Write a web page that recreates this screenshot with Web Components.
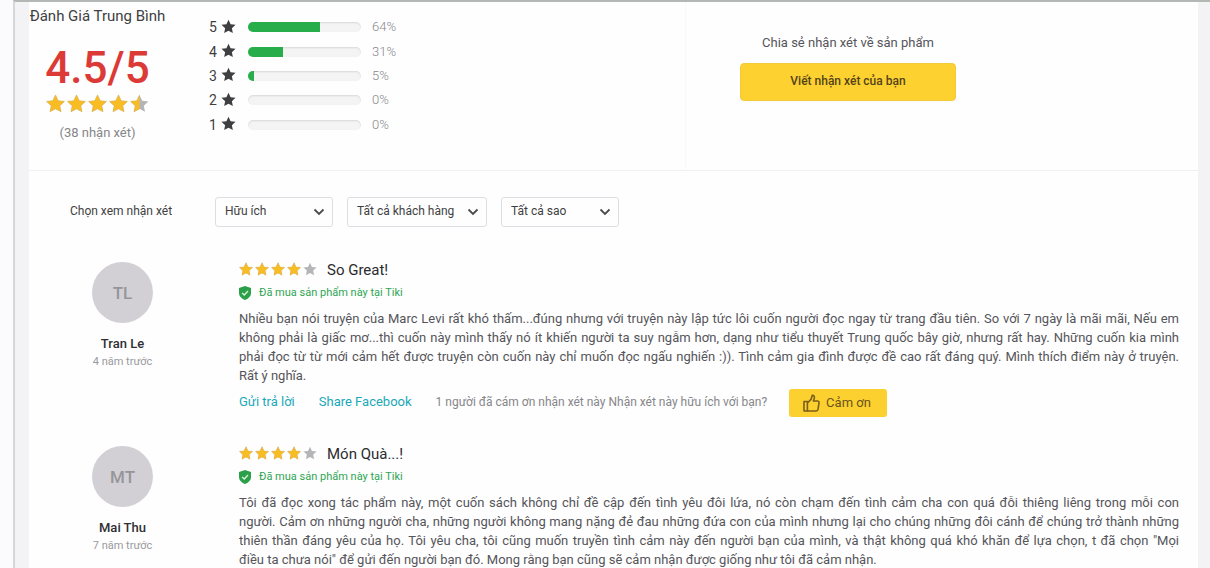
<!DOCTYPE html>
<html lang="vi">
<head>
<meta charset="utf-8">
<meta name="viewport" content="width=device-width, initial-scale=1">
<title>Đánh Giá Trung Bình</title>
<style>
  body {
    margin: 0;
    min-height: 100vh;
    background: #f3f3f5;
    color: #3f3f42;
    font-family: Roboto, "Noto Sans", sans-serif;
    font-size: 13px;
  }
</style>
</head>
<body>
<review-page>
  <rating-summary slot="summary"></rating-summary>
  <review-filters slot="filters"></review-filters>
  <review-item initials="TL" author="Tran Le" date="4 năm trước" rating="4" heading="So Great!">
    Nhiều bạn nói truyện của Marc Levi rất khó thấm...đúng nhưng với truyện này lập tức lôi cuốn người đọc ngay từ trang đầu tiên. So với 7 ngày là mãi mãi, Nếu em không phải là giấc mơ...thì cuốn này mình thấy nó ít khiến người ta suy ngẫm hơn, dạng như tiểu thuyết Trung quốc bây giờ, nhưng rất hay. Những cuốn kia mình phải đọc từ từ mới cảm hết được truyện còn cuốn này chỉ muốn đọc ngấu nghiến :)). Tình cảm gia đình được đề cao rất đáng quý. Mình thích điểm này ở truyện. Rất&nbsp;ý nghĩa.
    <review-actions slot="actions">1 người đã cám ơn nhận xét này Nhận xét này hữu ích với bạn?</review-actions>
  </review-item>
  <review-item initials="MT" author="Mai Thu" date="7 năm trước" rating="4" heading="Món Quà...!">
    Tôi đã đọc xong tác phẩm này, một cuốn sách không chỉ đề cập đến tình yêu đôi lứa, nó còn chạm đến tình cảm cha con quá đỗi thiêng liêng trong mỗi con người.&nbsp;Cảm ơn những người cha, những người không mang nặng đẻ đau những đứa con của mình nhưng lại cho chúng những đôi cánh để chúng trở thành những thiên&nbsp;thần đáng yêu của họ. Tôi yêu cha, tôi cũng muốn truyền tình cảm này đến người bạn của mình, và thật không quá khó khăn để lựa chọn, t đã chọn "Mọi điều&nbsp;ta&nbsp;chưa nói" để gửi đến người bạn đó. Mong rằng bạn cũng sẽ cảm nhận được giống như tôi đã cảm nhận.
  </review-item>
</review-page>

<script>
const STAR = 'M10 1 L12.8 7 L19.4 7.8 L14.5 12.3 L15.8 18.8 L10 15.6 L4.2 18.8 L5.5 12.3 L0.6 7.8 L7.2 7 Z';

class ReviewPage extends HTMLElement {
  connectedCallback() {
    this.attachShadow({ mode: 'open' });
    this.shadowRoot.innerHTML = `
      <style>
        :host {
          display: grid;
          grid-template-columns: 13px 16px minmax(0, 1fr) 12px;
          height: 100vh;
          overflow: hidden;
          background: #f3f3f5;
        }
        .edge { background: #fbfafc; }
        .gutter { border-left: 2px solid #d6d6d8; }
        .gutter, main { border-top: 2px solid #b4b8b4; }
        .gutter.right { border-left: 0; }
        main { background: #fefefe; }
        .reviews {
          display: grid;
          gap: 29px;
          padding: 35px 19px 0 34px;
        }
      </style>
      <div class="edge"></div>
      <div class="gutter"></div>
      <main>
        <slot name="summary"></slot>
        <slot name="filters"></slot>
        <div class="reviews"><slot></slot></div>
      </main>
      <div class="gutter right"></div>
    `;
  }
}

class StarRating extends HTMLElement {
  connectedCallback() {
    const value = Number(this.getAttribute('value'));
    const stars = [1, 2, 3, 4, 5].map((n) => {
      const part = Math.max(0, Math.min(1, value - n + 1));
      return `
        <svg viewBox="0 0 20 20" aria-hidden="true">
          <defs><clipPath id="c${n}"><rect width="${part * 20}" height="20"/></clipPath></defs>
          <path d="${STAR}" fill="#b5b5b9"/>
          <path d="${STAR}" fill="#f9bd23" stroke="#d9b24a" stroke-width="0.6" clip-path="url(#c${n})"/>
        </svg>`;
    }).join('');

    this.attachShadow({ mode: 'open' });
    this.shadowRoot.innerHTML = `
      <style>
        :host { display: inline-flex; gap: var(--star-gap, 2px); }
        svg { display: block; width: var(--star-size, 14px); height: var(--star-size, 14px); }
      </style>
      ${stars}
    `;
    this.setAttribute('role', 'img');
    this.setAttribute('aria-label', `${value}/5`);
  }
}

class RatingBar extends HTMLElement {
  connectedCallback() {
    const stars = this.getAttribute('stars');
    const percent = this.getAttribute('percent');
    this.attachShadow({ mode: 'open' });
    this.shadowRoot.innerHTML = `
      <style>
        :host {
          display: grid;
          grid-template-columns: 12px 15px 125px auto;
          align-items: center;
          justify-content: start;
        }
        label { font-size: 14px; line-height: 20px; }
        svg { width: 15px; height: 15px; margin-bottom: 2px; fill: #3f3f42; }
        progress {
          appearance: none;
          display: block;
          box-sizing: border-box;
          width: 113px;
          height: 10px;
          margin-left: 12px;
          border: 0;
          border-radius: 5px;
          overflow: hidden;
          background: #f3f3f3;
        }
        progress::-webkit-progress-bar {
          background: #f4f4f4;
          border-radius: 5px;
          box-shadow: inset 0 1px 2px rgba(0, 0, 0, 0.12);
        }
        progress::-webkit-progress-value { background: #27ae4b; }
        span { margin-left: 11px; font-weight: 300; line-height: 20px; color: #88888c; }
      </style>
      <label for="bar">${stars}</label>
      <svg viewBox="0 0 20 20" aria-hidden="true"><path d="${STAR}"/></svg>
      <progress id="bar" max="100" value="${percent}"></progress>
      <span>${percent}%</span>
    `;
  }
}

class RatingSummary extends HTMLElement {
  connectedCallback() {
    this.attachShadow({ mode: 'open' });
    this.shadowRoot.innerHTML = `
      <style>
        :host {
          box-sizing: border-box;
          display: grid;
          grid-template-columns: 180px 476px 1fr;
          height: 169px;
          border-bottom: 1px solid #f0f0f2;
        }
        h2 { margin: 4px 0 0; font-size: 15px; font-weight: 400; line-height: 20px; white-space: nowrap; }
        .average { width: 137px; text-align: center; }
        .score { margin-top: 17px; font-size: 44px; font-weight: 500; line-height: 50px; color: #dc3a37; }
        star-rating { --star-size: 19px; --star-gap: 2px; display: flex; justify-content: center; margin-top: 1px; }
        .count { margin-top: 10px; line-height: 20px; color: #86868a; }
        .bars { display: grid; grid-auto-rows: 1fr; height: 122px; margin-top: 13px; }
        .share { padding: 31px 0 0 54px; border-left: 1px solid #f8f8fa; }
        .box { width: 216px; text-align: center; }
        .box p { margin: 0; line-height: 20px; color: #55555a; }
        button {
          width: 100%;
          height: 38px;
          margin-top: 10px;
          padding: 0 0 3px;
          border: 1px solid #f2cb3a;
          border-radius: 4px;
          background: #fdd12f;
          color: #54431a;
          font: 500 12px Roboto, "Noto Sans", sans-serif;
          cursor: pointer;
        }
      </style>
      <section class="average">
        <h2>Đánh Giá Trung Bình</h2>
        <div class="score">4.5/5</div>
        <star-rating value="4.5"></star-rating>
        <div class="count">(38 nhận xét)</div>
      </section>
      <section class="bars">
        <rating-bar stars="5" percent="64"></rating-bar>
        <rating-bar stars="4" percent="31"></rating-bar>
        <rating-bar stars="3" percent="5"></rating-bar>
        <rating-bar stars="2" percent="0"></rating-bar>
        <rating-bar stars="1" percent="0"></rating-bar>
      </section>
      <section class="share">
        <div class="box">
          <p>Chia sẻ nhận xét về sản phẩm</p>
          <button type="button">Viết nhận xét của bạn</button>
        </div>
      </section>
    `;
  }
}

class FilterSelect extends HTMLElement {
  connectedCallback() {
    this.attachShadow({ mode: 'open' });
    this.shadowRoot.innerHTML = `
      <style>
        :host { display: grid; align-items: center; }
        select, svg { grid-area: 1 / 1; }
        select {
          appearance: none;
          box-sizing: border-box;
          width: 100%;
          height: 30px;
          padding: 0 28px 2px 9px;
          border: 1px solid #dfdce4;
          border-radius: 3px;
          background: #fefefe;
          color: #3f3f42;
          font: 400 12px Roboto, "Noto Sans", sans-serif;
        }
        svg { justify-self: end; width: 12px; height: 12px; margin-right: 8px; pointer-events: none; }
      </style>
      <select aria-label="${this.getAttribute('label')}">
        <option>${this.getAttribute('value')}</option>
      </select>
      <svg viewBox="0 0 12 12" fill="none" stroke="#4a4a4d" stroke-width="1.8" aria-hidden="true"><path d="M1.5 3.5 L6 8 L10.5 3.5"/></svg>
    `;
  }
}

class ReviewFilters extends HTMLElement {
  connectedCallback() {
    this.attachShadow({ mode: 'open' });
    this.shadowRoot.innerHTML = `
      <style>
        :host { display: flex; align-items: center; gap: 14px; padding: 26px 0 0 41px; }
        span { width: 131px; padding-bottom: 2px; font-size: 12px; }
        filter-select { width: 118px; }
        .wide { width: 140px; }
      </style>
      <span>Chọn xem nhận xét</span>
      <filter-select label="Sắp xếp" value="Hữu ích"></filter-select>
      <filter-select class="wide" label="Khách hàng" value="Tất cả khách hàng"></filter-select>
      <filter-select label="Số sao" value="Tất cả sao"></filter-select>
    `;
  }
}

class ReviewActions extends HTMLElement {
  connectedCallback() {
    this.attachShadow({ mode: 'open' });
    this.shadowRoot.innerHTML = `
      <style>
        :host { display: flex; align-items: center; margin-top: 4px; font-size: 12px; color: #86868a; }
        a, span { padding-bottom: 3px; line-height: 16px; }
        a { margin-right: 24px; font-size: 13px; color: #1ba8b8; text-decoration: none; }
        button {
          display: flex;
          align-items: center;
          gap: 6px;
          height: 28px;
          margin-left: 22px;
          padding: 0 16px 2px 14px;
          border: 0;
          border-radius: 3px;
          background: #fbd02f;
          color: #6b541a;
          font: 400 13px Roboto, "Noto Sans", sans-serif;
          cursor: pointer;
        }
        svg { width: 17px; height: 18px; margin-top: 2px; }
      </style>
      <a href="#reply">Gửi trả lời</a>
      <a href="#share">Share Facebook</a>
      <span><slot></slot></span>
      <button type="button">
        <svg viewBox="0 0 17 18" fill="none" stroke="#7a5f1a" stroke-width="1.6" stroke-linejoin="round" aria-hidden="true">
          <path d="M1 7.5 H4.4 V17 H1 Z"/>
          <path d="M4.4 9 L8 5.4 L9.2 1.4 C11 1.2 11.8 2.6 11.3 4.2 L10.4 7 H14.4 Q16.2 7 16 8.8 L15 15.4 Q14.6 17 13 17 H4.4"/>
        </svg>
        Cảm ơn
      </button>
    `;
  }
}

class ReviewItem extends HTMLElement {
  connectedCallback() {
    const attr = (name) => this.getAttribute(name);
    this.attachShadow({ mode: 'open' });
    this.shadowRoot.innerHTML = `
      <style>
        :host { display: grid; grid-template-columns: 119px 1fr; column-gap: 57px; }
        .author { text-align: center; }
        .avatar {
          display: grid;
          place-items: center;
          width: 61px;
          height: 61px;
          margin: 0 auto;
          border-radius: 50%;
          background: #d2d0d4;
          color: #969599;
          font-size: 17px;
          font-weight: 500;
        }
        .name { margin-top: 11px; font-weight: 500; line-height: 20px; color: #2f2f33; }
        .date { font-size: 11px; line-height: 16px; color: #9a9a9e; }
        .title { display: flex; align-items: center; gap: 10px; }
        star-rating { padding-bottom: 2px; }
        h3 { margin: 0; font-size: 15px; font-weight: 400; line-height: 16px; color: #2b2b2e; }
        .bought { display: flex; align-items: center; gap: 8px; margin-top: 7px; font-size: 11px; line-height: 16px; color: #2ea552; }
        .bought svg { width: 12px; height: 14px; }
        .text { margin: 8px 0 0; line-height: 19px; text-align: justify; color: #55555a; }
      </style>
      <div class="author">
        <div class="avatar">${attr('initials')}</div>
        <div class="name">${attr('author')}</div>
        <div class="date">${attr('date')}</div>
      </div>
      <article>
        <div class="title">
          <star-rating value="${attr('rating')}"></star-rating>
          <h3>${attr('heading')}</h3>
        </div>
        <div class="bought">
          <svg viewBox="0 0 12 14" aria-hidden="true">
            <path d="M6 0 L12 2 V7 C12 10.5 9 12.8 6 14 C3 12.8 0 10.5 0 7 V2 Z" fill="#2c9f49"/>
            <path d="M3.2 7 L5.3 9 L9 5" fill="none" stroke="#d8f5dd" stroke-width="1.4"/>
          </svg>
          Đã mua sản phẩm này tại Tiki
        </div>
        <p class="text"><slot></slot></p>
        <slot name="actions"></slot>
      </article>
    `;
  }
}

customElements.define('star-rating', StarRating);
customElements.define('rating-bar', RatingBar);
customElements.define('rating-summary', RatingSummary);
customElements.define('filter-select', FilterSelect);
customElements.define('review-filters', ReviewFilters);
customElements.define('review-actions', ReviewActions);
customElements.define('review-item', ReviewItem);
customElements.define('review-page', ReviewPage);
</script>
</body>
</html>
